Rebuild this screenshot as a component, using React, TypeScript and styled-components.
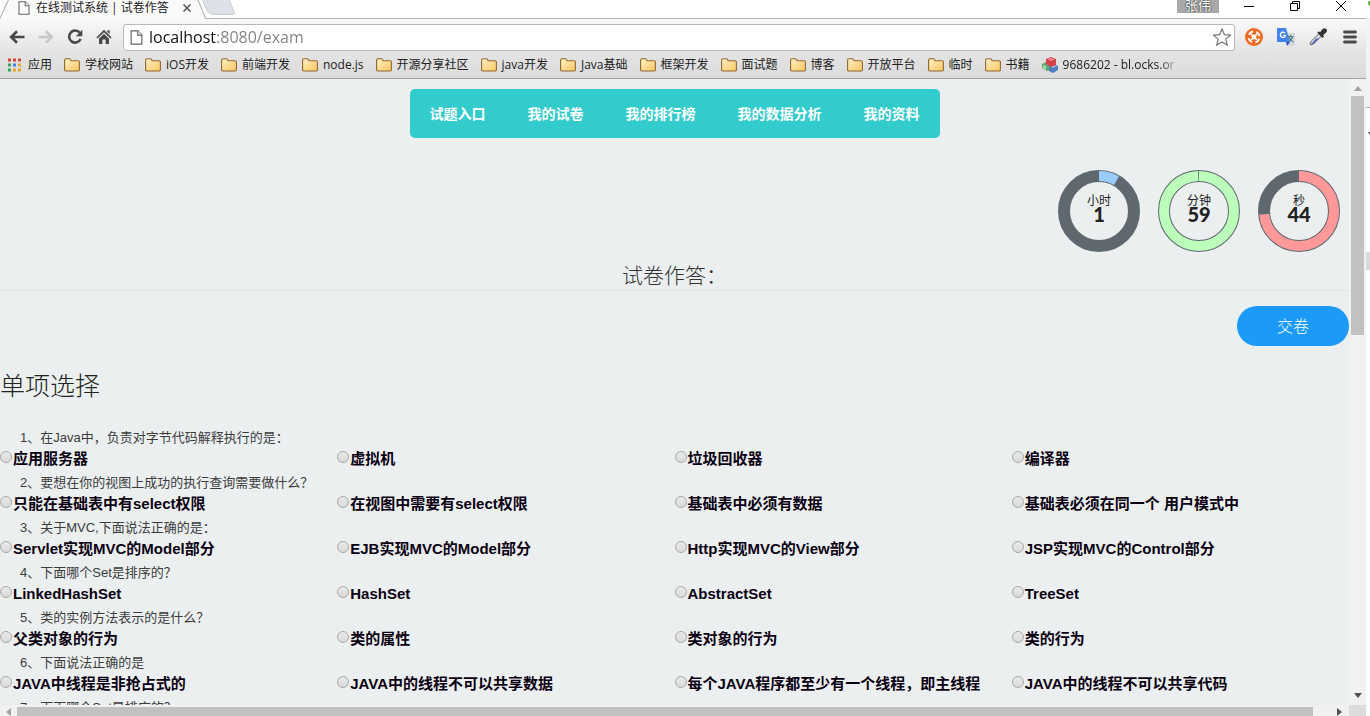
import React, { useState } from "react";
import styled, { createGlobalStyle } from "styled-components";

const cjk = '"Noto Sans CJK SC", sans-serif';
const ui = `"Open Sans", ${cjk}`;
const arial = `"Liberation Sans", ${cjk}`;

const GlobalStyle = createGlobalStyle`
  * { box-sizing: border-box; }
  body { margin: 0; background: #fafafa; font-family: ${arial}; }
  button, input { font: inherit; margin: 0; padding: 0; }
  button { border: 0; background: none; color: inherit; cursor: pointer; }
  a { color: inherit; text-decoration: none; }
  svg { display: block; flex: none; }
`;

const Screen = styled.div`
  display: flex;
  height: 100vh;
  overflow: hidden;
`;

const Browser = styled.div`
  flex: 1;
  min-width: 0;
  display: flex;
  flex-direction: column;
  background: #ebeff0;
`;

const Gutter = styled.div`
  width: 4px;
  background: #fdfdfd;
`;

const TabStrip = styled.header`
  display: flex;
  align-items: flex-start;
  height: 19px;
  background: #fff;
  border-bottom: 1px solid #b4b4b4;
  font: 12px/14px ${ui};
  color: #222;
`;

const Tab = styled.div`
  position: relative;
  display: flex;
  align-items: center;
  gap: 6px;
  width: 202px;
  height: 19px;
  padding: 0 7px 4px 18px;
  z-index: 1;
  &::before {
    content: "";
    position: absolute;
    inset: -2px 0 0 4px;
    background: #fafafa;
    border: solid #a8a8a8;
    border-width: 0 1px 0 0;
    transform: skewX(22deg);
    z-index: -1;
  }
  &::after {
    content: "";
    position: absolute;
    inset: -2px auto 0 4px;
    width: 20px;
    background: #fafafa;
    border-left: 1px solid #a8a8a8;
    transform: skewX(-25deg);
    z-index: -1;
  }
`;

const TabTitle = styled.span`
  flex: 1;
  white-space: nowrap;
`;

const NewTab = styled.button`
  width: 28px;
  height: 15px;
  margin-left: 3px;
  background: #dde1e7;
  border: 1px solid #c6cad0;
  border-top: 0;
  border-radius: 0 0 4px 6px;
  transform: skewX(22deg);
`;

const WindowControls = styled.div`
  display: flex;
  align-items: flex-start;
  margin-left: auto;
  padding-right: 19px;
`;

const Profile = styled.button`
  width: 42px;
  height: 13px;
  margin-right: 24px;
  overflow: hidden;
  background: #a9a9a9;
  color: #fff;
  font: 13px/9px ${cjk};
  padding-bottom: 4px;
  text-shadow: 0 0 2px #333, 0 0 1px #333;
`;

const WindowButton = styled.button`
  display: flex;
  width: 12px;
  height: 14px;
  margin-right: 34px;
  &:last-child { margin-right: 0; }
`;

const Chrome = styled.div`
  background: linear-gradient(#f9f9f9, #e4e4e4 55%, #dbdbdb);
  border-bottom: 1px solid #a3a3a3;
`;

const Toolbar = styled.div`
  display: flex;
  align-items: center;
  gap: 12px;
  height: 33px;
  padding: 4px 8px 1px;
`;

const IconButton = styled.button`
  display: flex;
  align-items: center;
  justify-content: center;
  width: 17px;
  height: 20px;
`;

const AddressBar = styled.label`
  flex: 1;
  display: flex;
  align-items: center;
  gap: 6px;
  height: 27px;
  margin-left: -1px;
  margin-right: -2px;
  padding: 0 4px 0 6px;
  background: #fff;
  border: 1px solid #b9b9b9;
  border-radius: 3px;
`;

const Address = styled.input`
  flex: 1;
  min-width: 0;
  height: 24px;
  border: 0;
  outline: 0;
  font: 16px/24px ${ui};
  color: #808080;
  background: linear-gradient(90deg, #111 68px, #808080 68px);
  background-clip: text;
  -webkit-background-clip: text;
  -webkit-text-fill-color: transparent;
`;

const Extensions = styled.div`
  display: flex;
  align-items: center;
  gap: 15px;
`;

const Bookmarks = styled.nav`
  display: flex;
  align-items: center;
  gap: 12px;
  height: 26px;
  padding: 0 7px;
  font: 12px/16px ${ui};
  color: #222;
`;

const Bookmark = styled.a<{ $fade?: boolean }>`
  display: flex;
  align-items: center;
  gap: 5px;
  white-space: nowrap;
  ${(p) =>
    p.$fade &&
    `width: 136px; overflow: hidden;
     mask-image: linear-gradient(90deg, #000 118px, transparent 138px);`}
`;

const Viewport = styled.div`
  flex: 1;
  min-height: 0;
  display: grid;
  grid-template-columns: 1fr 17px;
  grid-template-rows: 1fr 11px;
`;

const Page = styled.main`
  overflow: hidden;
  padding-top: 10px;
`;

const Menu = styled.nav`
  display: flex;
  gap: 2px;
  width: fit-content;
  margin: 0 auto;
  background: #33cccc;
  border-radius: 5px;
`;

const MenuLink = styled.a`
  padding: 0 20px;
  font: bold 14px/49px ${cjk};
  color: #fff;
`;

const Timers = styled.section`
  display: flex;
  justify-content: flex-end;
  gap: 18px;
  padding: 32px 9px 8px;
`;

const Timer = styled.div`
  display: grid;
  place-items: center;
  width: 82px;
  height: 82px;
  > * { grid-area: 1 / 1; }
`;

const Reading = styled.div`
  display: flex;
  flex-direction: column;
  align-items: center;
  color: #222;
  padding-bottom: 8px;
`;

const Unit = styled.span`
  font: 12px/14px ${cjk};
`;

const Count = styled.strong`
  font: 900 20px/14px Lato, sans-serif;
`;

const PaperTitle = styled.h1`
  margin: 0;
  padding-bottom: 2px;
  border-bottom: 1px solid #dfe3e4;
  text-align: center;
  font: 300 21px/28px ${cjk};
  color: #333;
`;

const Actions = styled.div`
  display: flex;
  justify-content: flex-end;
  padding: 15px 0 19px;
`;

const Submit = styled.button`
  width: 112px;
  height: 40px;
  padding-bottom: 2px;
  border-radius: 20px;
  background: #1b9af7;
  color: #fff;
  font: 300 16px/24px ${cjk};
`;

const SectionTitle = styled.h2`
  margin: 0 0 24px;
  font: 300 25px/38px ${cjk};
  color: #222;
`;

const Question = styled.fieldset`
  min-width: 0;
  margin: 0;
  padding: 0;
  border: 0;
  height: 45px;
`;

const Prompt = styled.legend`
  padding: 0 0 0 20px;
  font: 13px/22px ${arial};
  color: #3c3c3c;
`;

const Options = styled.div`
  display: grid;
  grid-template-columns: repeat(4, 1fr);
`;

const Option = styled.label`
  display: flex;
  align-items: center;
  gap: 1px;
  height: 19px;
  white-space: nowrap;
  font: bold 15px/19px ${arial};
  color: #0a0010;
`;

const Radio = styled.input`
  appearance: none;
  width: 12px;
  height: 12px;
  margin-bottom: 3px;
  border: 1px solid #a9a9a9;
  border-radius: 50%;
  background: linear-gradient(#e9e9e9, #dadada);
  &:checked { background: radial-gradient(#444 3px, #e2e2e2 4px); }
`;

const VScroll = styled.div`
  display: flex;
  flex-direction: column;
  align-items: center;
  justify-content: space-between;
  padding: 7px 0 7px;
  background: #f1f1f1;
`;

const VThumb = styled.div`
  width: 13px;
  flex: 0 0 39%;
  margin: 5px 0 auto;
  background: #c1c1c1;
`;

const HScroll = styled.div`
  display: flex;
  align-items: flex-end;
  gap: 6px;
  padding: 2px 7px 0 6px;
  background: #f1f1f1;
`;

const HThumb = styled.div`
  flex: 1;
  height: 9px;
  margin-right: 18px;
  background: #c1c1c1;
`;

const Corner = styled.div`
  background: #dcdcdc;
`;

const PageIcon = ({ size = 14 }: { size?: number }) => (
  <svg width={size - 2} height={size} viewBox="0 0 12 14" fill="#fff" stroke="#666" strokeWidth="1.1">
    <path d="M1 .8h6.3L11 4.6v8.6H1z" />
    <path d="M7.2 .8v4H11" />
  </svg>
);

const FolderIcon = () => (
  <svg width="16" height="14" viewBox="0 0 16 14">
    <defs>
      <linearGradient id="folder" x1="0" y1="0" x2="1" y2="1">
        <stop offset="0" stopColor="#fff0c4" />
        <stop offset="1" stopColor="#f9c760" />
      </linearGradient>
    </defs>
    <path
      d="M.6 11.800V2.200Q.6.8 1.900.8H5.200Q6.200.8 6.600 1.700L7.100 2.700H14Q15.400 2.700 15.400 4V11.800Q15.400 13 14.200 13H1.800Q.6 13 .6 11.800Z"
      fill="url(#folder)"
      stroke="#946532"
      strokeWidth="1.100"
    />
  </svg>
);

const appColors = ["#d9453a", "#d9453a", "#d9453a", "#3aa757", "#3f7de0", "#e8a626", "#3aa757", "#e8a626", "#e8a626"];

const AppsIcon = () => (
  <svg width="16" height="14" viewBox="0 0 16 14">
    {appColors.map((c, i) => (
      <rect key={i} x={(i % 3) * 5 + 1} y={Math.floor(i / 3) * 5 + 0.5} width="3" height="3" fill={c} />
    ))}
  </svg>
);

const BlocksIcon = () => (
  <svg width="16" height="16" viewBox="0 0 16 16">
    <path d="M0 7l4-2 4 3v5l-3 1-5-3z" fill="#5eaa6d" />
    <path d="M1 8l3 1v4l-3-2z" fill="#a9d4a8" />
    <path d="M7 9l5-2 4 2v4l-5 3-4-2z" fill="#4c7fbd" />
    <path d="M8 9l4-1 3 1-4 2z" fill="#9fc3e8" />
    <path d="M4 2l5-2 5 2v6l-5 2-5-3z" fill="#d3414a" />
    <path d="M5 2l4-1 4 1-4 2z" fill="#ef8a8c" />
  </svg>
);

const Arrow = ({ d, w, h, color = "#505050" }: { d: string; w: number; h: number; color?: string }) => (
  <svg width={w} height={h} viewBox={`0 0 ${w} ${h}`}>
    <path d={d} fill={color} />
  </svg>
);

const folders = ["学校网站", "iOS开发", "前端开发", "node.js", "开源分享社区", "java开发", "Java基础", "框架开发", "面试题", "博客", "开放平台", "临时", "书籍"];

const menu = ["试题入口", "我的试卷", "我的排行榜", "我的数据分析", "我的资料"];

const timers = [
  { unit: "小时", value: 1, share: 1 / 12, color: "#99ccff" },
  { unit: "分钟", value: 59, share: 0.995, color: "#bbffbb" },
  { unit: "秒", value: 44, share: 44 / 60, color: "#ff9999" },
];

const questions = [
  { text: "1、在Java中，负责对字节代码解释执行的是：", options: ["应用服务器", "虚拟机", "垃圾回收器", "编译器"] },
  { text: "2、要想在你的视图上成功的执行查询需要做什么？", options: ["只能在基础表中有select权限", "在视图中需要有select权限", "基础表中必须有数据", "基础表必须在同一个 用户模式中"] },
  { text: "3、关于MVC,下面说法正确的是：", options: ["Servlet实现MVC的Model部分", "EJB实现MVC的Model部分", "Http实现MVC的View部分", "JSP实现MVC的Control部分"] },
  { text: "4、下面哪个Set是排序的？", options: ["LinkedHashSet", "HashSet", "AbstractSet", "TreeSet"] },
  { text: "5、类的实例方法表示的是什么？", options: ["父类对象的行为", "类的属性", "类对象的行为", "类的行为"] },
  { text: "6、下面说法正确的是", options: ["JAVA中线程是非抢占式的", "JAVA中的线程不可以共享数据", "每个JAVA程序都至少有一个线程，即主线程", "JAVA中的线程不可以共享代码"] },
  { text: "7、下面哪个Set是排序的？", options: [] },
];

const Ring = ({ share, color }: { share: number; color: string }) => {
  const length = 2 * Math.PI * 35;
  return (
    <svg width="82" height="82" viewBox="0 0 82 82" fill="none">
      <circle cx="41" cy="41" r="35" stroke="#5f686e" strokeWidth="12" />
      <circle
        cx="41"
        cy="41"
        r="35"
        stroke={color}
        strokeWidth="10"
        strokeDasharray={`${length * share} ${length}`}
        transform="rotate(-90 41 41)"
      />
    </svg>
  );
};

export default function App() {
  const [url, setUrl] = useState("localhost:8080/exam");
  return (
    <>
      <GlobalStyle />
      <Screen>
        <Browser>
          <TabStrip>
            <Tab>
              <PageIcon />
              <TabTitle>在线测试系统 | 试卷作答</TabTitle>
              <IconButton aria-label="关闭标签页">
                <svg width="8" height="8" viewBox="0 0 8 8" stroke="#555" strokeWidth="1.5">
                  <path d="M.5.5l7 7M7.500.5l-7 7" />
                </svg>
              </IconButton>
            </Tab>
            <NewTab aria-label="新标签页" />
            <WindowControls>
              <Profile>张伟</Profile>
              <WindowButton aria-label="最小化">
                <svg width="12" height="14" viewBox="0 0 12 14" stroke="#000">
                  <path d="M1 6.500h10" />
                </svg>
              </WindowButton>
              <WindowButton aria-label="还原">
                <svg width="12" height="14" viewBox="0 0 12 14" stroke="#000" fill="none">
                  <path d="M1.500 3.500h7v7h-7zM3.500 3.500v-2h7v7h-2" />
                </svg>
              </WindowButton>
              <WindowButton aria-label="关闭">
                <svg width="12" height="14" viewBox="0 0 12 14" stroke="#000">
                  <path d="M1 1l10 10M11 1L1 11" />
                </svg>
              </WindowButton>
            </WindowControls>
          </TabStrip>

          <Chrome>
            <Toolbar>
              <IconButton aria-label="后退">
                <svg width="16" height="14" viewBox="0 0 16 14" fill="none" stroke="#484848" strokeWidth="2.600">
                  <path d="M15.500 7H3M8 1.300L2.200 7 8 12.700" />
                </svg>
              </IconButton>
              <IconButton aria-label="前进">
                <svg width="16" height="14" viewBox="0 0 16 14" fill="none" stroke="#c8c8c8" strokeWidth="2.600">
                  <path d="M.5 7H13M8 1.300L13.800 7 8 12.700" />
                </svg>
              </IconButton>
              <IconButton aria-label="重新加载">
                <svg width="16" height="16" viewBox="0 0 16 16">
                  <path d="M12.800 3.800A6 6 0 1 0 13.600 10" fill="none" stroke="#484848" strokeWidth="2.600" />
                  <path d="M15.300.8v6.400H8.900z" fill="#484848" />
                </svg>
              </IconButton>
              <IconButton aria-label="主页">
                <svg width="16" height="16" viewBox="0 0 16 16" fill="#484848">
                  <path d="M8 .8L15.600 8.400l-1.200 1.200L8 3.300 1.600 9.600.4 8.400zM11.400 1.200h2.200v4l-2.200-2.200z" />
                  <path d="M8 4.700l5 5V15H9.600v-4.600H6.400V15H3V9.700z" />
                </svg>
              </IconButton>
              <AddressBar>
                <PageIcon size={15} />
                <Address aria-label="地址" value={url} onChange={(e) => setUrl(e.target.value)} />
                <IconButton aria-label="收藏">
                  <svg width="18" height="18" viewBox="0 0 18 18" fill="#fff" stroke="#777" strokeWidth="1.200">
                    <path d="M9 .9l2.400 5.700 6.100.5-4.700 4 1.500 6L9 13.900l-5.300 3.200 1.500-6-4.700-4 6.100-.5z" />
                  </svg>
                </IconButton>
              </AddressBar>
              <Extensions>
                <IconButton aria-label="扩展">
                  <svg width="18" height="18" viewBox="0 0 18 18">
                    <circle cx="9" cy="9" r="9" fill="#f26a21" />
                    <circle cx="9" cy="9" r="5.500" fill="none" stroke="#fff" strokeWidth="2" strokeDasharray="5.200 3.440" transform="rotate(18 9 9)" />
                    <path d="M6.200 6.200l5.600 5.600M11.800 6.200l-5.600 5.600" stroke="#fff" strokeWidth="1.500" />
                    <circle cx="9" cy="9" r="2.400" fill="#fff" />
                  </svg>
                </IconButton>
                <IconButton aria-label="翻译">
                  <svg width="18" height="18" viewBox="0 0 18 18">
                    <path d="M7 5h10q1 0 1 1v11q0 1-1 1h-6z" fill="#d3d7dc" />
                    <path d="M10.500 8.500h6M13.500 7v1.500M15.500 8.700q-1 4-4.500 5.500M11.800 9q1.500 3.600 4.700 5" stroke="#4b7a78" strokeWidth="1.200" fill="none" />
                    <path d="M1 0h8l4 14H1q-1 0-1-1V1q0-1 1-1z" fill="#4384ea" />
                    <path d="M9 14h4l-3 4z" fill="#2b59b4" />
                    <path d="M7.900 5.100a2.600 2.600 0 1 0 .6 2.200H6" fill="none" stroke="#fff" strokeWidth="1.300" />
                  </svg>
                </IconButton>
                <IconButton aria-label="取色器">
                  <svg width="18" height="18" viewBox="0 0 18 18">
                    <path d="M10 5.500l2.500 2.500-7.700 7.700-3 1.300-.8-.8 1.300-3z" fill="#d8deea" stroke="#65656d" />
                    <path d="M7 10.500h3l-5.500 5.200-2.500.9z" fill="#4a64b8" />
                    <path d="M8.200 4.800l1.500-1.500 1.300 1L13.600 1q2-1.500 3.600 0t0 3.500L14 7.200l1 1.400-1.500 1.500z" fill="#333" />
                  </svg>
                </IconButton>
                <IconButton aria-label="菜单">
                  <svg width="14" height="14" viewBox="0 0 14 14" stroke="#4a4a4a" strokeWidth="2.800" strokeLinecap="round">
                    <path d="M1.500 2h11M1.500 7h11M1.500 12h11" />
                  </svg>
                </IconButton>
              </Extensions>
            </Toolbar>
            <Bookmarks>
              <Bookmark href="#">
                <AppsIcon />
                应用
              </Bookmark>
              {folders.map((name) => (
                <Bookmark key={name} href="#">
                  <FolderIcon />
                  {name}
                </Bookmark>
              ))}
              <Bookmark href="#" $fade>
                <BlocksIcon />
                9686202 - bl.ocks.or
              </Bookmark>
            </Bookmarks>
          </Chrome>

          <Viewport>
            <Page>
              <Menu>
                {menu.map((m) => (
                  <MenuLink key={m} href="#">
                    {m}
                  </MenuLink>
                ))}
              </Menu>
              <Timers>
                {timers.map((t) => (
                  <Timer key={t.unit}>
                    <Ring share={t.share} color={t.color} />
                    <Reading>
                      <Unit>{t.unit}</Unit>
                      <Count>{t.value}</Count>
                    </Reading>
                  </Timer>
                ))}
              </Timers>
              <PaperTitle>试卷作答：</PaperTitle>
              <Actions>
                <Submit>交卷</Submit>
              </Actions>
              <SectionTitle>单项选择</SectionTitle>
              {questions.map((q, i) => (
                <Question key={i}>
                  <Prompt>{q.text}</Prompt>
                  <Options>
                    {q.options.map((o) => (
                      <Option key={o}>
                        <Radio type="radio" name={`q${i}`} />
                        {o}
                      </Option>
                    ))}
                  </Options>
                </Question>
              ))}
            </Page>
            <VScroll>
              <Arrow w={8} h={5} d="M0 5L4 0l4 5z" color="#a3a3a3" />
              <VThumb />
              <Arrow w={8} h={5} d="M0 0l4 5 4-5z" />
            </VScroll>
            <HScroll>
              <Arrow w={5} h={8} d="M5 0L0 4l5 4z" color="#a3a3a3" />
              <HThumb />
              <Arrow w={5} h={8} d="M0 0l5 4-5 4z" />
            </HScroll>
            <Corner />
          </Viewport>
        </Browser>
        <Gutter>
          <svg width="4" height="270" viewBox="0 0 4 270">
            <path d="M0 18h4v89H0z" fill="#f3f3f3" />
            <path d="M4 1v5q-2-1-2-3t2-2z" fill="#4caf2e" />
            <path d="M0 107h4v1H0z" fill="#aaa" />
            <path d="M2 132h2v3z" fill="#444" />
            <path d="M0 252h4v18H0z" fill="#d9d9d9" />
          </svg>
        </Gutter>
      </Screen>
    </>
  );
}
